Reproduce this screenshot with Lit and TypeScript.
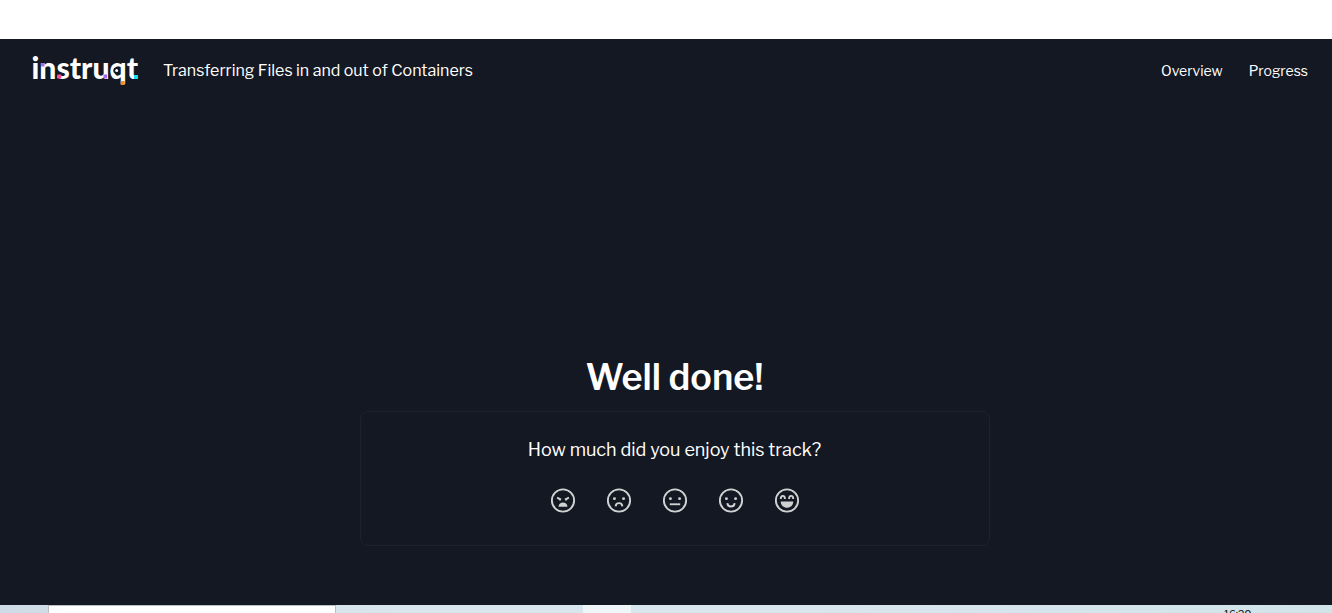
import { LitElement, html, css, svg } from "lit";
import { customElement } from "lit/decorators.js";

const faces = [
  {
    label: "Very bad",
    art: svg`<path d="M6.300 9.200l3.800 1.900M17.700 9.200l-3.800 1.900" /><circle class="dot" cx="8.900" cy="11" r="1" /><circle class="dot" cx="15.100" cy="11" r="1" /><path class="dot" d="M7.700 18c.3-5.400 8.300-5.400 8.600 0z" />`,
  },
  {
    label: "Bad",
    art: svg`<circle class="dot" cx="7.600" cy="10.200" r="1.400" /><circle class="dot" cx="16.400" cy="10.200" r="1.400" /><path d="M8.800 17.600c.2-4.200 6.200-4.200 6.400 0" />`,
  },
  {
    label: "Neutral",
    art: svg`<circle class="dot" cx="7.600" cy="10.200" r="1.400" /><circle class="dot" cx="16.400" cy="10.200" r="1.400" /><path d="M7 15.600h10" />`,
  },
  {
    label: "Good",
    art: svg`<circle class="dot" cx="7.600" cy="10.200" r="1.400" /><circle class="dot" cx="16.400" cy="10.200" r="1.400" /><path d="M8.500 14.500c.2 4.300 6.800 4.300 7 0" />`,
  },
  {
    label: "Great",
    art: svg`<path d="M6 10.500c0-4 4-4 4 0M14 10.500c0-4 4-4 4 0" /><path class="dot" d="M6 13h12c0 8-12 8-12 0z" />`,
  },
];

@customElement("app-root")
export class AppRoot extends LitElement {
  static styles = css`
    :host {
      display: flex;
      flex-direction: column;
      height: 613px;
      overflow: hidden;
      background: #fff;
      color: #fff;
      font-family: "Libre Franklin", "Open Sans", sans-serif;
      font-size: 16px;
    }
    .page {
      margin-top: 39px;
      height: 566px;
      flex: none;
      background: #141822;
      display: flex;
      flex-direction: column;
    }
    header {
      height: 62px;
      display: flex;
      align-items: center;
      padding: 0 24px 0 32px;
      white-space: nowrap;
    }
    .logo {
      width: 108px;
      height: 34px;
      flex: none;
      overflow: visible;
    }
    .wordmark {
      font: 900 30.5px Lato, sans-serif;
      fill: #fff;
    }
    .title {
      margin-left: 23px;
    }
    nav {
      margin-left: auto;
      display: flex;
      gap: 26px;
      font-size: 14px;
      padding-top: 1px;
    }
    main {
      flex: 1;
      display: flex;
      flex-direction: column;
      align-items: center;
      padding: 251px 0 0 18px;
    }
    h1 {
      margin: 0 1px 8px 0;
      font-size: 36px;
      line-height: 51px;
      font-weight: 600;
      white-space: nowrap;
    }
    .card {
      box-sizing: border-box;
      width: 630px;
      height: 135px;
      border: 1px solid #1e222d;
      border-radius: 8px;
      padding-top: 24px;
      display: flex;
      flex-direction: column;
      align-items: center;
    }
    .question {
      font-size: 18px;
      line-height: 28px;
      white-space: nowrap;
      margin-right: 1px;
    }
    .faces {
      display: flex;
      gap: 30px;
      margin-top: 23px;
    }
    .face {
      width: 26px;
      height: 26px;
      fill: none;
      stroke: #d0d1d3;
      stroke-width: 1.8;
    }
    .dot {
      fill: #d0d1d3;
      stroke: none;
    }
    .taskbar {
      height: 8px;
      display: flex;
      background: linear-gradient(90deg, #cddce6, #d8e6ee 30%, #d8e6ee 60%, #d2e3ea);
      overflow: hidden;
    }
    .search {
      box-sizing: border-box;
      width: 288px;
      margin-left: 48px;
      border: 1px solid #b9bec2;
      border-bottom: 0;
      background: #fff;
    }
    .active {
      width: 48px;
      margin-left: 247px;
      background: #eff5f8;
    }
    .clock {
      margin-left: 593px;
      margin-top: 4px;
      font-size: 10.5px;
      line-height: 12px;
      color: #111;
    }
  `;

  render() {
    return html`
      <div class="page">
        <header>
          <svg class="logo" viewBox="0 0 108 34" role="img" aria-label="instruqt">
            <text class="wordmark" x="-0.500" y="26" textLength="106.500" lengthAdjust="spacingAndGlyphs">instruqt</text>
            <rect x="9" y="10" width="3.500" height="3.500" fill="#a66cf0" />
            <rect x="25.300" y="21.500" width="4" height="4" fill="#ff4f9a" />
            <rect x="71.500" y="21.500" width="3.500" height="4" fill="#a66cf0" />
            <rect x="88.700" y="28" width="4" height="4" fill="#f78b28" />
            <rect x="102" y="22" width="4" height="4" fill="#19dff5" />
            <circle cx="84.700" cy="17.600" r="3.400" fill="#141822" />
            <circle cx="84.700" cy="17.600" r="1.500" fill="#fff" />
          </svg>
          <span class="title">Transferring Files in and out of Containers</span>
          <nav><span>Overview</span><span>Progress</span></nav>
        </header>
        <main>
          <h1>Well done!</h1>
          <section class="card">
            <div class="question">How much did you enjoy this track?</div>
            <div class="faces">
              ${faces.map(
                (f) => html`<svg class="face" viewBox="-.5 -1 25 25" role="img" aria-label=${f.label}>
                  <circle cx="12" cy="12" r="10.700" />${f.art}
                </svg>`,
              )}
            </div>
          </section>
        </main>
      </div>
      <div class="taskbar">
        <div class="search"></div>
        <div class="active"></div>
        <div class="clock">16:20</div>
      </div>
    `;
  }
}
